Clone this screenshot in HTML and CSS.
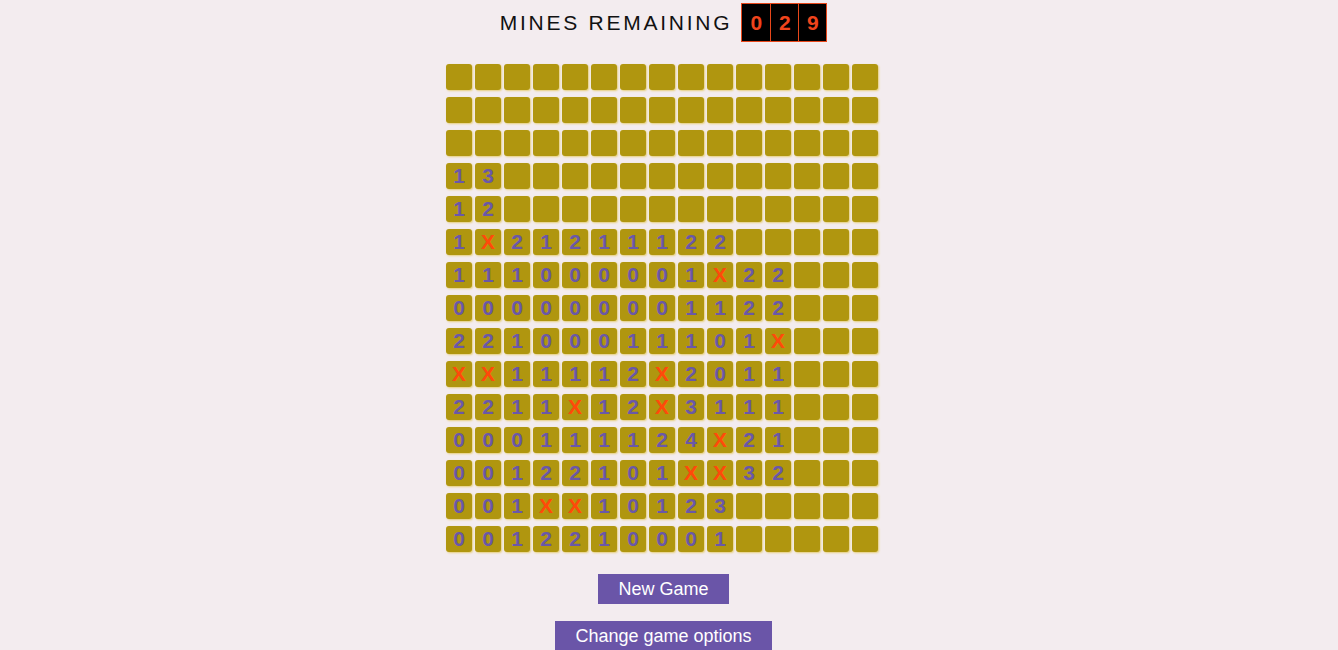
FILE: index.html
```html
<!DOCTYPE html>
<html lang="en">
<head>
    <meta charset="UTF-8">
    <meta name="viewport" content="width=device-width, initial-scale=1.0">
    <title>minesweeper</title>
    <link rel="stylesheet" href="styles.css">
</head>
<body>
    <div class="game">
        <div class="header">
            <h1>MINES REMAINING</h1>
            <div class="counter">
                <span>0</span><span>2</span><span>9</span>
            </div>
        </div>
        <div class="board" id="board"></div>
        <div class="controls">
            <button class="btn">New Game</button>
            <button class="btn">Change game options</button>
        </div>
    </div>
    <script>
        let rows = [
            "...............",
            "...............",
            "...............",
            "13.............",
            "12.............",
            "1X21211122.....",
            "111000001X22...",
            "000000001122...",
            "22100011101X...",
            "XX11112X2011...",
            "2211X12X3111...",
            "000111124X21...",
            "00122101XX32...",
            "001XX10123.....",
            "0012210001....."
        ]
        let board = document.getElementById("board")
        rows.forEach(row => {
            for (let ch of row) {
                let cell = document.createElement("div")
                cell.className = "cell"
                if (ch == "X") {
                    cell.classList.add("mine")
                    cell.textContent = "X"
                } else if (ch != ".") {
                    cell.textContent = ch
                }
                board.appendChild(cell)
            }
        })
    </script>
</body>
</html>
```

FILE: styles.css
```css
*{
    margin: 0;
    padding: 0;
    box-sizing: border-box;
}
body{
    background: #f3ecef;
    font-family: "Liberation Sans", Arial, sans-serif;
}
.game{
    display: flex;
    flex-direction: column;
    align-items: center;
    padding-right: 14px;
}
.header{
    display: flex;
    align-items: center;
    margin-top: 3px;
    margin-left: 3px;
}
.header h1{
    font-size: 21px;
    font-weight: normal;
    letter-spacing: 2.75px;
    color: #111;
    margin-right: 9px;
}
.counter{
    display: flex;
    background: #000;
    border: 1px solid #e8471a;
}
.counter span{
    width: 28px;
    height: 37px;
    line-height: 37px;
    text-align: center;
    color: #f0441c;
    font-size: 21px;
    font-weight: bold;
    border-left: 1px solid #e8471a;
}
.counter span:first-child{
    border-left: none;
}
.board{
    display: grid;
    grid-template-columns: repeat(15, 26px);
    grid-auto-rows: 26px;
    column-gap: 3px;
    row-gap: 7px;
    margin-top: 22px;
}
.cell{
    background: #b0960f;
    border-radius: 3px;
    box-shadow: 1px 1px 2px #e6cf7a;
    color: #6a58a8;
    font-size: 21px;
    font-weight: bold;
    text-align: center;
    line-height: 26px;
}
.cell.mine{
    color: #ff4a0a;
}
.controls{
    display: flex;
    flex-direction: column;
    align-items: center;
    gap: 17px;
    margin-top: 22px;
    margin-left: 3px;
}
.btn{
    background: #6a55a8;
    color: white;
    border: none;
    font-family: "Liberation Sans", Arial, sans-serif;
    font-size: 18px;
    height: 30px;
    padding: 0 20px;
}
```
